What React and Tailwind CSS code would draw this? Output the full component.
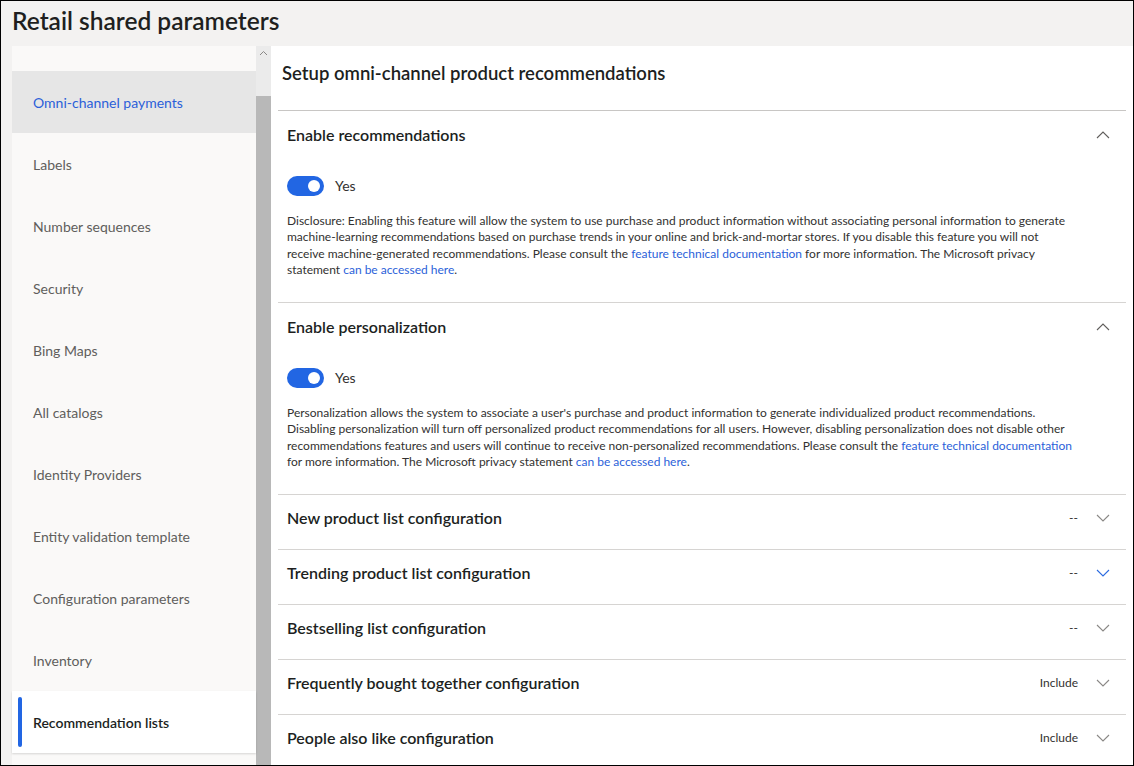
import React from 'react';

const navItems = [
  'Omni-channel payments',
  'Labels',
  'Number sequences',
  'Security',
  'Bing Maps',
  'All catalogs',
  'Identity Providers',
  'Entity validation template',
  'Configuration parameters',
  'Inventory',
  'Recommendation lists',
];

const Chevron = ({ up, className }) => (
  <svg width="14" height="8" viewBox="0 0 14 8" className={className}>
    {up ? (
      <polyline points="1,7 7,1 13,7" fill="none" stroke="currentColor" strokeWidth="1.1" />
    ) : (
      <polyline points="1,1 7,7 13,1" fill="none" stroke="currentColor" strokeWidth="1.1" />
    )}
  </svg>
);

const Toggle = () => (
  <div className="flex items-center gap-[11px]">
    <div className="w-[37px] h-[20px] rounded-full bg-[#2266e3] flex items-center justify-end pr-[4px]">
      <div className="w-[12px] h-[12px] rounded-full bg-white" />
    </div>
    <span className="text-[14px] text-[#323130]">Yes</span>
  </div>
);

const Link = ({ children }) => <span className="text-[#2b5fd9]">{children}</span>;

const Collapsed = ({ title, value, blue }) => (
  <div className="h-[55px] border-b border-[#d6d4d2] flex items-center pl-[9px] pr-[16px] pb-[8px]">
    <h3 className="flex-1 text-[16px] font-semibold text-[#201f1e]">{title}</h3>
    <span className="text-[12px] text-[#323130] mr-[18px]">{value}</span>
    <Chevron className={blue ? 'text-[#2b6be0]' : 'text-[#8a8886]'} />
  </div>
);

export default function App() {
  return (
    <div
      className="w-[1134px] h-[766px] border border-black bg-[#f3f2f1] flex flex-col overflow-hidden"
      style={{ fontFamily: '"Segoe UI", Lato, "Noto Sans", sans-serif' }}
    >
      <header className="h-[45px] flex items-center pl-[11px]">
        <h1 className="text-[24.5px] font-semibold text-[#201f1e] leading-none pb-[4px]">Retail shared parameters</h1>
      </header>
      <div className="flex flex-1 min-h-0 pl-[11px]">
        <nav className="w-[244px] bg-[#faf9f8] flex flex-col">
          <div className="h-[25px] shrink-0" />
          {navItems.map((item, i) => {
            const hover = i === 0;
            const active = i === navItems.length - 1;
            return (
              <div
                key={item}
                className={`h-[62px] shrink-0 relative flex items-center pl-[21px] text-[14px] ${
                  hover ? 'bg-[#e6e6e6] text-[#2b5fd9]' : active ? 'bg-white text-[#201f1e] font-semibold shadow-[0_1px_2px_rgba(0,0,0,0.15)]' : 'text-[#605e5c]'
                }`}
              >
                {active && <div className="absolute left-[6px] top-[6px] bottom-[6px] w-[4px] rounded-full bg-[#2266e3]" />}
                {item}
              </div>
            );
          })}
        </nav>
        <div className="w-[15px] bg-[#ebebeb] flex flex-col">
          <div className="h-[50px] flex justify-center pt-[4px]">
            <svg width="9" height="6" viewBox="0 0 9 6">
              <polyline points="1,5 4.5,1.5 8,5" fill="none" stroke="#8a8886" strokeWidth="1" />
            </svg>
          </div>
          <div className="flex-1 bg-[#b8b8b8]" />
        </div>
        <main className="flex-1 bg-white px-[7px] overflow-hidden">
          <div className="border-b border-[#c8c6c4] pt-[15px] pb-[25px] pl-[4px]">
            <h2 className="text-[18.5px] leading-[24px] font-semibold text-[#201f1e]">Setup omni-channel product recommendations</h2>
          </div>

          <section className="border-b border-[#d6d4d2] pl-[9px] pr-[16px] pb-[24px]">
            <div className="h-[48px] flex items-center">
              <h3 className="flex-1 text-[16px] font-semibold text-[#201f1e]">Enable recommendations</h3>
              <Chevron up className="text-[#605e5c]" />
            </div>
            <div className="pt-[16px] pb-[17px]">
              <Toggle />
            </div>
            <p className="text-[12px] leading-[16.3px] text-[#323130]">
              Disclosure: Enabling this feature will allow the system to use purchase and product information without associating personal information to generate
              <br />
              machine-learning recommendations based on purchase trends in your online and brick-and-mortar stores. If you disable this feature you will not
              <br />
              receive machine-generated recommendations. Please consult the <Link>feature technical documentation</Link> for more information. The Microsoft privacy
              <br />
              statement <Link>can be accessed here</Link>.
            </p>
          </section>

          <section className="border-b border-[#d6d4d2] pl-[9px] pr-[16px] pb-[24px]">
            <div className="h-[47px] flex items-center">
              <h3 className="flex-1 text-[16px] font-semibold text-[#201f1e]">Enable personalization</h3>
              <Chevron up className="text-[#605e5c]" />
            </div>
            <div className="pt-[17px] pb-[17px]">
              <Toggle />
            </div>
            <p className="text-[12px] leading-[16.3px] text-[#323130]">
              Personalization allows the system to associate a user's purchase and product information to generate individualized product recommendations.
              <br />
              Disabling personalization will turn off personalized product recommendations for all users. However, disabling personalization does not disable other
              <br />
              recommendations features and users will continue to receive non-personalized recommendations. Please consult the <Link>feature technical documentation</Link>
              <br />
              for more information. The Microsoft privacy statement <Link>can be accessed here</Link>.
            </p>
          </section>

          <Collapsed title="New product list configuration" value="--" />
          <Collapsed title="Trending product list configuration" value="--" blue />
          <Collapsed title="Bestselling list configuration" value="--" />
          <Collapsed title="Frequently bought together configuration" value="Include" />
          <Collapsed title="People also like configuration" value="Include" />
        </main>
      </div>
    </div>
  );
}
